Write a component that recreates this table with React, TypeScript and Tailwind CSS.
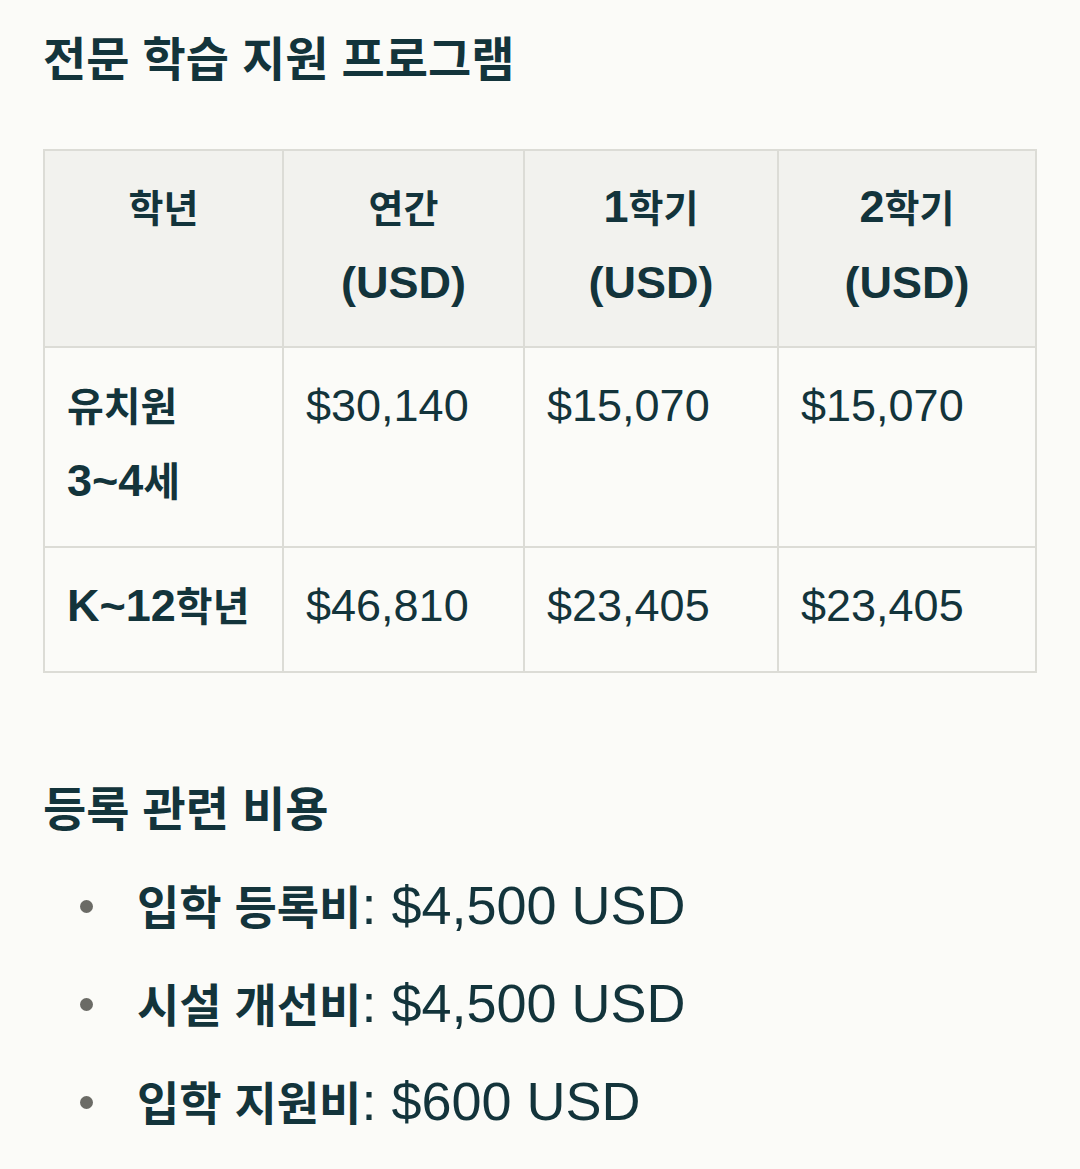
import { ReactNode } from "react";

const HANGUL = /([\uAC00-\uD7A3]+(?:\s+[\uAC00-\uD7A3]+)*)/;

// hangul runs get their own size, the reference font draws them smaller than latin
const withKo = (text: string, koClass: string): ReactNode[] =>
  text
    .split(HANGUL)
    .filter((part) => part !== "")
    .map((part, i) =>
      HANGUL.test(part) ? (
        <span key={i} className={koClass}>
          {part}
        </span>
      ) : (
        part
      )
    );

const headers = ["학년", "연간 (USD)", "1학기 (USD)", "2학기 (USD)"];

const rows = [
  ["유치원 3~4세", "$30,140", "$15,070", "$15,070"],
  ["K~12학년", "$46,810", "$23,405", "$23,405"],
];

const fees = [
  { label: "입학 등록비", value: "$4,500 USD" },
  { label: "시설 개선비", value: "$4,500 USD" },
  { label: "입학 지원비", value: "$600 USD" },
];

const App = () => {
  return (
    <div className="min-h-[1169px] bg-[#fbfbf8] px-[43px] pt-[28px] text-[#13343b] font-['Liberation_Sans','Noto_Sans_CJK_KR',sans-serif]">
      <h2 className="text-[47px] leading-[64px] font-bold">
        전문 학습 지원 프로그램
      </h2>

      <table className="mt-[57px] w-full table-fixed border-collapse text-[45px] leading-[74px]">
        <colgroup>
          <col className="w-[239px]" />
          <col className="w-[241px]" />
          <col className="w-[254px]" />
          <col />
        </colgroup>
        <thead>
          <tr className="bg-[#f2f2ee]">
            {headers.map((h) => (
              <th
                key={h}
                className="border-2 border-[#dcdcd6] px-[22px] pt-[19px] pb-[26px] text-center align-top font-bold"
              >
                {withKo(h, "text-[38px]")}
              </th>
            ))}
          </tr>
        </thead>
        <tbody>
          {rows.map((row) => (
            <tr key={row[0]}>
              {row.map((cell, i) => (
                <td
                  key={i}
                  className={`border-2 border-[#dcdcd6] px-[22px] pt-[21px] pb-[27px] align-top ${
                    i === 0 ? "font-bold" : "font-normal"
                  }`}
                >
                  {withKo(cell, i === 0 ? "text-[40px]" : "text-[38px]")}
                </td>
              ))}
            </tr>
          ))}
        </tbody>
      </table>

      <h3 className="mt-[105px] text-[47px] leading-[64px] font-bold">
        등록 관련 비용
      </h3>

      <ul className="mt-[23px] flex flex-col gap-[15px]">
        {fees.map((f) => (
          <li key={f.label} className="flex items-center text-[54px] leading-[80px]">
            <span className="ml-[37px] h-[13px] w-[13px] shrink-0 rounded-full bg-[#6b6b66]" />
            <span className="ml-[44px]">
              <span className="text-[46px] font-bold">{f.label}</span>: {f.value}
            </span>
          </li>
        ))}
      </ul>
    </div>
  );
};

export default App;
